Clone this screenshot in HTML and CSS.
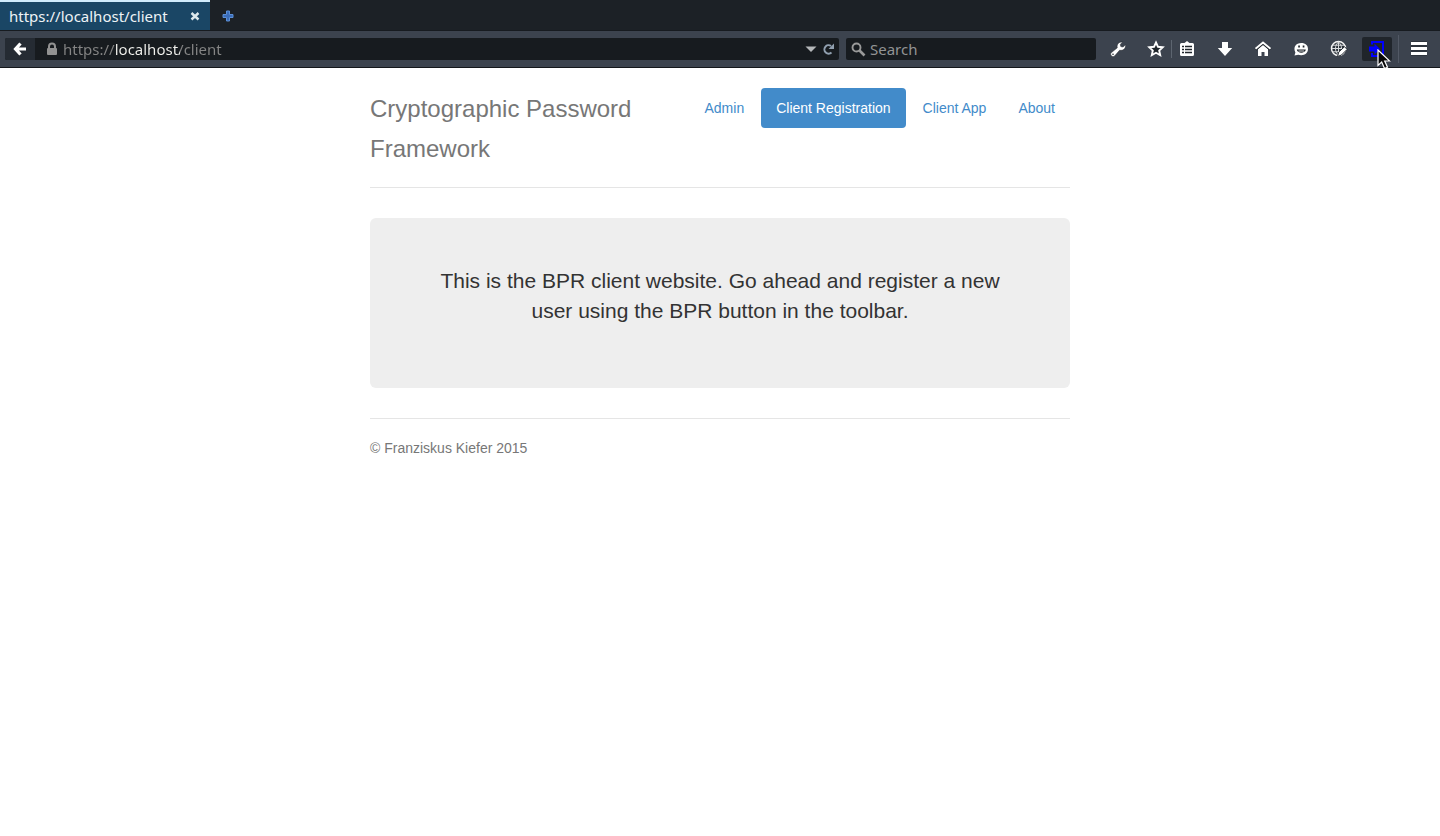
FILE: index.html
```html
<!DOCTYPE html>
<html lang="en">
<head>
<meta charset="utf-8">
<title>https://localhost/client</title>
<link rel="stylesheet" href="styles.css">
</head>
<body>
<div class="tabstrip">
  <div class="tab">
    <span class="tab-title">https://localhost/client</span>
    <button class="tab-close" aria-label="Close tab"><svg width="10" height="10" viewBox="0 0 10 10"><path d="M1.500 2l7 6.500M8.500 2l-7 6.500" stroke="#dce8ec" stroke-width="2.400"/></svg></button>
  </div>
  <button class="tab-new" aria-label="New tab"><svg width="12" height="12" viewBox="0 0 12 12"><path d="M4.500 1h3v3.500H11v3H7.500V11h-3V7.500H1v-3h3.500z" fill="#3a6cb8" stroke="#5b8fd6"/></svg></button>
</div>
<div class="toolbar">
  <div class="urlbar">
    <button class="back" aria-label="Back"><svg width="14" height="14" viewBox="0 0 14 14"><path d="M7.500 1.500L2.500 7l5 5.500M2.500 7H13" fill="none" stroke="#fff" stroke-width="3.200"/></svg></button>
    <svg class="lock" width="12" height="14" viewBox="0 0 12 14"><path d="M3 7V4.500a3 3 0 016 0V7" fill="none" stroke="#929292" stroke-width="2"/><rect x="1" y="6" width="10" height="7" rx="1" fill="#929292"/></svg>
    <input class="url-input" type="text" aria-label="Address" value="https://localhost/client">
    <button class="url-action" aria-label="Show history"><svg width="12" height="6" viewBox="0 0 12 6"><path d="M.5.500h11L6 6z" fill="#b5b8ba"/></svg></button>
    <button class="url-action" aria-label="Reload"><svg width="13" height="12" viewBox="0 0 13 12"><path d="M9 3A4.200 4.200 0 109.500 9.500" fill="none" stroke="#91a0b0" stroke-width="2"/><path d="M12 .5V6H6.500z" fill="#91a0b0"/></svg></button>
  </div>
  <div class="search">
    <svg width="15" height="15" viewBox="0 0 15 15"><circle cx="5.500" cy="5.500" r="4" fill="none" stroke="#999" stroke-width="1.900"/><path d="M8.500 8.500l5 5" stroke="#999" stroke-width="2.600"/></svg>
    <input class="search-input" type="text" aria-label="Search" placeholder="Search">
  </div>
  <div class="tools">
    <div class="tool-group">
      <button class="tool" aria-label="Developer tools"><svg width="18" height="18" viewBox="0 0 18 18"><path d="M2.200 12.800L8.300 7.800C7.500 4.500 9.700 1.600 13.500 1.900L11.300 4.600l.5 2 2.200.4 2.600-2.200c.3 4-2.700 6.200-6 5.400L5.600 16c-2 1.800-5.200-1.200-3.400-3.200z" fill="#fff" stroke="#20252b" stroke-width=".5"/><circle cx="4" cy="14.200" r=".8" fill="#20252b"/></svg></button>
      <button class="tool" aria-label="Bookmark this page"><svg width="18" height="18" viewBox="0 0 18 18"><path d="M9 2.500l2 4.300 4.700.5-3.500 3.200 1 4.700L9 12.800l-4.200 2.400 1-4.700-3.500-3.200L7 6.800z" fill="#20262c" stroke="#fff" stroke-width="1.900"/></svg></button>
    </div>
    <span class="divider"></span>
    <div class="tool-group">
      <button class="tool" aria-label="Bookmarks list"><svg width="18" height="18" viewBox="0 0 18 18"><path d="M2 4.500Q2 3 3.500 3h3L9 1l2.500 2h3Q16 3 16 4.500v10q0 1.500-1.500 1.500h-11Q2 16 2 14.500z" fill="#fff"/><path d="M4 6.500h2M7 6.500h7M4 9.500h2M7 9.500h7M4 12.500h2M7 12.500h7" stroke="#20262c" stroke-width="1.500"/></svg></button>
      <button class="tool" aria-label="Downloads"><svg width="18" height="18" viewBox="0 0 18 18"><path d="M6 2h6v6h4.200L9 15.900 1.800 8H6z" fill="#fff"/></svg></button>
      <button class="tool" aria-label="Home"><svg width="18" height="18" viewBox="0 0 18 18"><path d="M4 9l5-4.300L14 9v7h-3.500v-4h-3v4H4z" fill="#fff"/><path d="M1.500 9.500L9 3.200l7.500 6.300" fill="none" stroke="#20262c" stroke-width="2.800"/><path d="M1.500 8.800L9 2.500l7.500 6.300" fill="none" stroke="#fff" stroke-width="1.900"/></svg></button>
      <button class="tool" aria-label="Chat"><svg width="18" height="18" viewBox="0 0 18 18"><path d="M9.200 3c4.300 0 6.800 2.500 6.800 6s-2.700 6.200-6.800 6.200c-1.200 0-2.200-.2-3-.5L2.500 15.500l.9-3C.8 7 4 3 9.200 3z" fill="#fff"/><path d="M4.800 9.500h9c-.5 4.200-8.500 4.200-9 0z" fill="#20262c"/><path d="M6.500 11h5.500" stroke="#fff" stroke-width=".8"/><path d="M6.200 5.500h1.700v2H6.200zM10.700 5.500h1.700v2h-1.700z" fill="#20262c"/></svg></button>
      <button class="tool" aria-label="Web editor"><svg width="18" height="18" viewBox="0 0 18 18"><circle cx="8.500" cy="8.500" r="7" fill="#2c333b" stroke="#f4f4f4" stroke-width="1.500"/><path d="M8.500 2v13M2 8.500h13M3 5.200h11M3 11.800h11M8.500 2C4.500 5 4.500 12 8.500 15M8.500 2c4 3 4 10 0 13" fill="none" stroke="#d8dadc"/><path d="M7.500 16.500l1.300-4.500 5.700-5.300 2.600 2.700-5.600 5.600z" fill="#fff" stroke="#252b32"/></svg></button>
      <button class="tool tool-active" aria-label="BPR registration"><svg width="18" height="18" viewBox="0 0 18 18"><path d="M4 4.500V2h11v14H4v-3" fill="none" stroke="#00f" stroke-width="2"/><path d="M1 6.500h5.500V3.500L12 9l-5.500 5.500v-3H1z" fill="#00f"/></svg>
        <svg class="pointer" width="14" height="21" viewBox="0 0 14 21"><path d="M1 1v15.500l3.700-3.400 2.800 6.400 3-1.300-2.800-6.200h5z" fill="#080808" stroke="#fff" stroke-width="1.200"/></svg></button>
    </div>
    <span class="divider divider-menu"></span>
    <button class="tool" aria-label="Open menu"><svg width="18" height="16" viewBox="0 0 18 16"><path d="M1 2.500h16M1 7.500h16M1 12.500h16" stroke="#20262c" stroke-width="4"/><path d="M1 2.500h16M1 7.500h16M1 12.500h16" stroke="#fff" stroke-width="3"/></svg></button>
  </div>
</div>
<div class="container">
  <header class="header">
    <h3 class="brand">Cryptographic Password Framework</h3>
    <nav class="nav">
      <a class="nav-link" href="#admin">Admin</a>
      <a class="nav-link nav-link-active" href="#client">Client Registration</a>
      <a class="nav-link" href="#app">Client App</a>
      <a class="nav-link" href="#about">About</a>
    </nav>
  </header>
  <main class="jumbotron">
    <p class="lead">This is the BPR client website. Go ahead and register a new user using the BPR button in the toolbar.</p>
  </main>
  <footer class="footer">© Franziskus Kiefer 2015</footer>
</div>
</body>
</html>
```

FILE: styles.css
```css
* { box-sizing: border-box; }

body {
  margin: 0;
  background: #fff;
  color: #333;
  font: 14px/20px "Liberation Sans", Arial, sans-serif;
}

button {
  display: flex;
  align-items: center;
  justify-content: center;
  padding: 0;
  border: 0;
  background: none;
}

svg { display: block; flex: none; }

.tabstrip,
.toolbar { font: 15px/20px "Noto Sans", "Open Sans", sans-serif; }

.tabstrip {
  display: flex;
  height: 31px;
  background: #1c2126;
  border-bottom: 1px solid #171b20;
}

.tab {
  display: flex;
  align-items: center;
  justify-content: space-between;
  width: 210px;
  padding: 0 10px 0 9px;
  border-top: 2px solid #d0ebfc;
  background: #1a4665;
  color: #eef3f6;
}

.tab-new { width: 36px; padding-top: 2px; }

.toolbar {
  display: flex;
  align-items: center;
  gap: 7px;
  height: 37px;
  padding: 0 6px 0 5px;
  background: #3c434e;
  border-bottom: 1px solid #14171b;
}

.urlbar,
.search {
  display: flex;
  align-items: center;
  height: 22px;
  border-radius: 2px;
  background: #171b1f;
}

.urlbar { flex: 1; min-width: 0; padding-right: 4px; }

.back {
  width: 30px;
  height: 22px;
  border-radius: 2px 0 0 2px;
  background: #252b33;
}

.lock { margin: 0 5px 0 11px; }

.url-input,
.search-input {
  flex: 1;
  min-width: 0;
  height: 22px;
  padding: 0;
  border: 0;
  outline: 0;
  background: none;
  font: inherit;
}

/* Only the host part of the address is highlighted. */
.url-input {
  color: transparent;
  background: linear-gradient(90deg, #858585 53px, #f2f2ee 53px, #f2f2ee 117px, #858585 117px);
  -webkit-background-clip: text;
  background-clip: text;
}

.url-action { margin-left: 5px; }

.search { width: 250px; gap: 4px; padding: 0 5px; }

.search-input { color: #ddd; }
.search-input::placeholder { color: #929394; opacity: 1; }

.tools,
.tool-group { display: flex; align-items: center; }

.tool-group { gap: 8px; }

.tool { width: 30px; height: 24px; }

.tool-active {
  position: relative;
  border-radius: 2px;
  background: #20252b;
}

.pointer { position: absolute; left: 15px; top: 12px; }

.divider { width: 1px; height: 18px; background: #5d6570; }

.divider-menu { height: 28px; margin: 0 5px 0 6px; background: #525965; }

.container { max-width: 700px; margin: 0 auto; padding-top: 20px; }

.header {
  display: flex;
  align-items: flex-start;
  justify-content: space-between;
  padding-bottom: 18px;
  border-bottom: 1px solid #e5e5e5;
}

.brand {
  flex: 1;
  margin: 0;
  padding-top: 1px;
  color: #777;
  font-size: 24px;
  font-weight: 400;
  line-height: 40px;
}

.nav { display: flex; gap: 2px; }

.nav-link {
  padding: 10px 15px;
  border-radius: 4px;
  color: #428bca;
  text-decoration: none;
}

.nav-link-active { background: #428bca; color: #fff; }

.jumbotron {
  margin: 30px 0;
  padding: 48px 60px;
  border-radius: 6px;
  background: #eee;
  text-align: center;
}

.lead {
  margin: 0 0 14px;
  font-size: 21px;
  line-height: 30px;
}

.footer {
  padding-top: 19px;
  border-top: 1px solid #e5e5e5;
  color: #777;
}
```
